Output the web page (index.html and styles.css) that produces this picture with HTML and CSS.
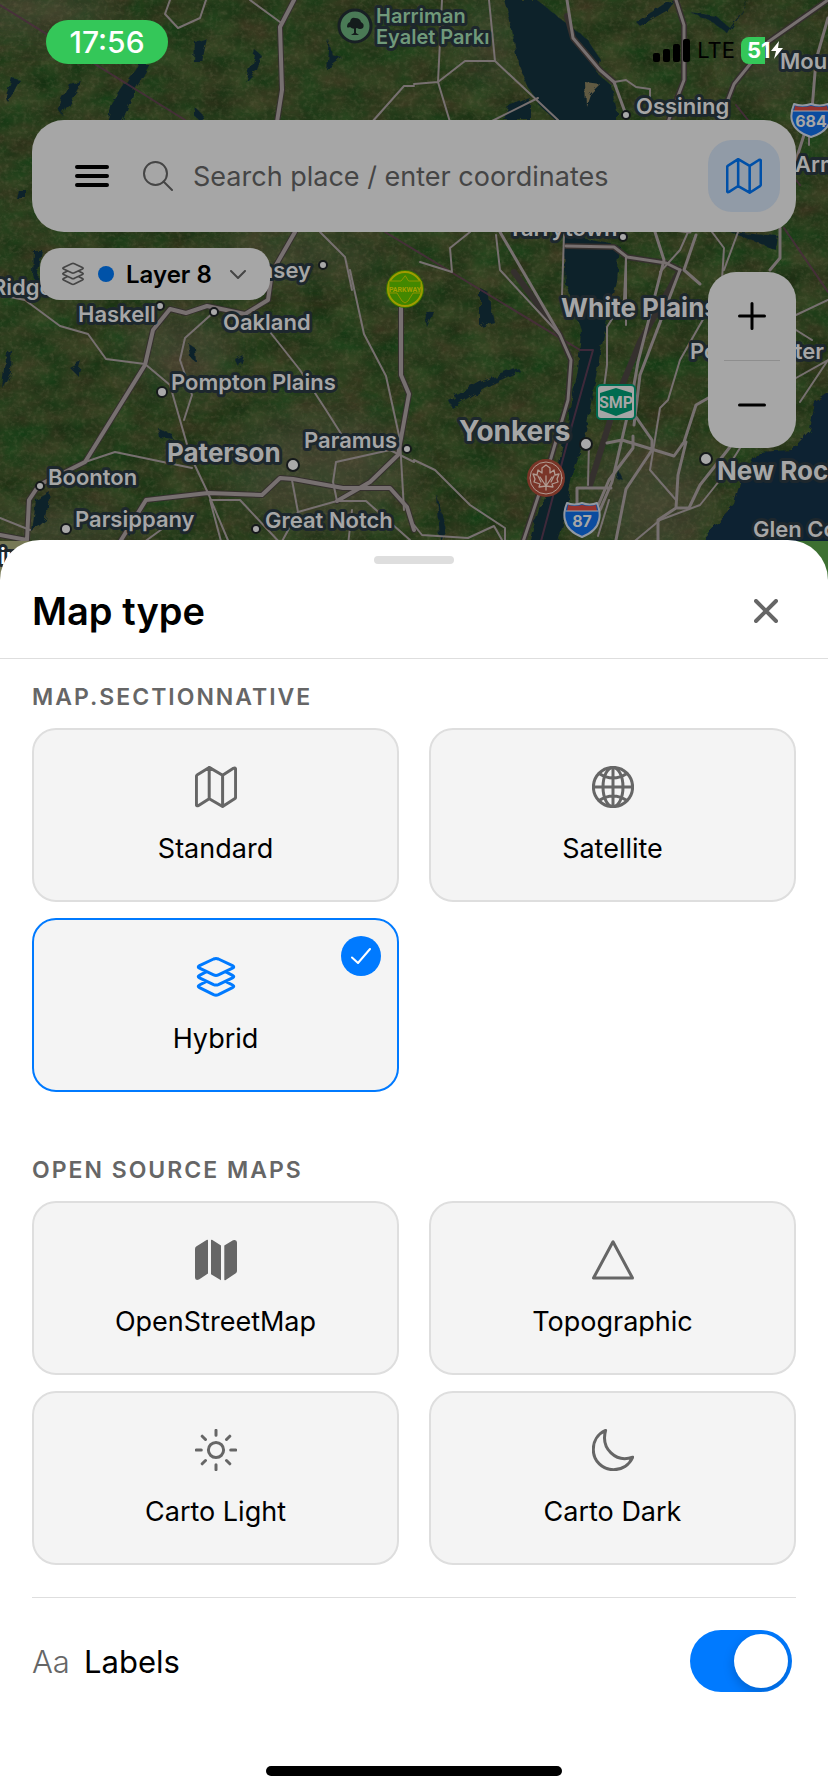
FILE: index.html
```html
<!DOCTYPE html>
<html lang="en">
<head>
<meta charset="utf-8">
<meta name="viewport" content="width=device-width, initial-scale=1">
<title>Map type</title>
<link rel="stylesheet" href="styles.css">
</head>
<body>
<svg class="sprite" aria-hidden="true">
  <symbol id="i-map" viewBox="0 0 42 42">
    <path d="M1.4 10.6Q1.4 9.4 2.4 8.8L14.2 1.4L27.6 9.2L38.4 2.3Q40.6 1.2 40.6 3.5V31Q40.6 32.2 39.6 32.8L27.6 40.5L14.2 32.7L3.6 39.5Q1.4 40.6 1.4 38.4ZM14.2 1.4V32.7M27.6 9.2V40.5"/>
  </symbol>
  <symbol id="i-layers" viewBox="0 0 42 42">
    <path d="M18.6 3Q21 2 23.4 3L37.5 9.6Q40 10.9 37.5 12.2L23.4 18.9Q21 20 18.6 18.9L4.5 12.2Q2 10.9 4.5 9.6ZM11.5 15.7L4.5 19.3Q2 20.6 4.5 21.9L18.6 28.6Q21 29.6 23.4 28.6L37.5 21.9Q40 20.6 37.5 19.3L30.5 15.7M11.5 25.4L4.5 29Q2 30.3 4.5 31.6L18.6 38.6Q21 39.7 23.4 38.6L37.5 31.6Q40 30.3 37.5 29L30.5 25.4"/>
  </symbol>
</svg>

<main class="screen">
  <svg class="map" viewBox="0 0 828 600" preserveAspectRatio="xMidYMin slice" role="img" aria-label="Satellite map north of New York">
    <defs>
      <filter id="terrain" x="0" y="0" width="100%" height="100%" color-interpolation-filters="sRGB">
        <feTurbulence type="fractalNoise" baseFrequency="0.03 0.045" numOctaves="6" seed="8"/>
        <feColorMatrix values="0.2 0 0 0 0.065  0.04 0.12 0 0 0.155  0.08 0.04 0 0 0.05  0 0 0 0 1"/>
      </filter>
      <filter id="grain" x="0" y="0" width="100%" height="100%" color-interpolation-filters="sRGB">
        <feTurbulence type="fractalNoise" baseFrequency="0.22 0.26" numOctaves="3" seed="3"/>
        <feColorMatrix values="0 0 0 0 0.45  0 0 0 0 0.43  0 0 0 0 0.32  1.8 0 0 0 -0.82"/>
      </filter>
      <filter id="soft"><feGaussianBlur stdDeviation="18"/></filter>
      <filter id="ragged"><feTurbulence type="fractalNoise" baseFrequency="0.12" numOctaves="2"/><feDisplacementMap in="SourceGraphic" scale="7"/></filter>
    </defs>
    <rect width="828" height="600" filter="url(#terrain)"/>
    <g filter="url(#soft)" fill="#514b3d" opacity=".5">
      <ellipse cx="30" cy="10" rx="90" ry="22"/><ellipse cx="490" cy="40" rx="18" ry="50"/>
      <ellipse cx="290" cy="255" rx="90" ry="18"/><ellipse cx="180" cy="350" rx="50" ry="40"/>
      <ellipse cx="320" cy="470" rx="90" ry="55"/><ellipse cx="650" cy="500" rx="60" ry="60"/>
      <ellipse cx="770" cy="60" rx="30" ry="30"/><ellipse cx="60" cy="530" rx="70" ry="20"/>
    </g>
    <rect width="828" height="600" filter="url(#grain)" opacity=".36"/>

    <g fill="#10242b" filter="url(#ragged)">
      <path d="M505 0H537L562 20L586 38L601 60L598 74L612 86L617 112V122H557L540 106L527 86L518 62L512 30Z"/>
      <path d="M563 234L620 246L617 282L606 325L599 360L586 430L573 470L567 505L557 542H529L541 503L558 470L564 436L578 370L581 330L566 285Z"/>
      <path d="M830 392L815 402L810 430L792 450L758 452L742 476L734 504L700 542L705 552H830Z" fill="#0d2030"/>
      <path d="M138 64H150L135 90L122 122H107L112 104Z"/>
      <path d="M195 42L207 38L202 62L194 62Z"/><path d="M255 50L262 56L257 70L246 82L251 66Z"/>
      <path d="M12 78L20 80L8 102L5 98Z"/><path d="M70 85L82 82L62 115L58 108Z"/>
      <path d="M329 40L332 55L342 58L326 70Z"/><path d="M18 190h8v8h-10z"/><path d="M34 250H42L36 285L33 275Z"/>
      <path d="M196 108L204 116L202 122L194 116Z"/><path d="M5 358L12 350L11 372L2 388Z"/><path d="M70 368L82 362L78 376Z"/>
      <path d="M189 344L195 348L196 362L191 358Z"/><path d="M236 360L244 356L240 368Z"/><path d="M158 428L172 434L174 440L160 438Z"/>
      <path d="M36 500L50 492L46 520L32 532Z"/><path d="M120 530L132 515L130 536Z"/>
      <path d="M480 288L488 292L494 322L480 326Z"/><path d="M425 310L434 312L428 328Z"/>
      <path d="M448 400L480 382L518 368L520 371L484 388L452 408Z"/>
      <path d="M636 22L664 4L676 0L668 10L640 26Z"/><path d="M690 12L716 16L730 28L750 0L728 34L712 22Z"/>
      <path d="M508 106L530 98V120H504Z"/><path d="M730 232L778 236L776 250Z"/><path d="M618 470L623 480L616 478Z"/>
      <path d="M437 495L440 540L446 530Z"/>
    </g>
    <path d="M585 82L600 84L590 94L586 106Z" fill="#605a42" filter="url(#ragged)"/>

    <g fill="none" stroke="#4b2c3e" stroke-width="2" opacity=".8">
      <path d="M0 5L185 120M385 232L451 272L580 350H593L572 425L540 545M736 105L800 185M784 228L828 292"/>
    </g>
    <g fill="none" stroke="#35302e" stroke-linejoin="round">
      <path stroke-width="6" d="M294 0L280 27L282 90L277 122M295 232L272 272L268 300L245 314M401 305V375L409 394L398 455L370 482L337 501M0 535L27 540L29 500L39 485L85 462L145 365L153 330L170 309L186 313L207 306L245 314M118 545L146 500L208 493L262 495L280 478L293 479L343 488L390 488L407 507L414 530"/>
      <path stroke-width="6" d="M567 16L573 38L600 70L614 82M514 272L560 335L571 360L568 400L551 458L522 545M676 0L684 25V80L668 122M828 0L768 42L734 84L720 120M566 246L614 247L627 257L666 263L680 270L640 342L618 395L590 485"/>
    </g>
    <g fill="none" stroke="#777070" stroke-linejoin="round">
      <path stroke-width="4" d="M294 0L280 27L282 90L277 122M295 232L272 272L268 300L245 314M401 305V375L409 394L398 455L370 482L337 501M0 535L27 540L29 500L39 485L85 462L145 365L153 330L170 309L186 313L207 306L245 314M118 545L146 500L208 493L262 495L280 478L293 479L343 488L390 488L407 507L414 530"/>
      <path stroke-width="3" d="M567 0L573 38L600 70L614 82L625 112M500 232L560 335L571 360L568 400L551 458L522 545M676 0L684 25V80L668 122M828 0L768 42L734 84L720 120M566 246L614 247L627 257L666 263L680 270M828 18L816 60L812 110L796 160M780 228V258L770 270"/>
      <path stroke-width="3" d="M655 232L664 260L638 362L632 396L612 482L600 510M680 270L640 375L634 425M636 417L652 440V450L626 489L615 545M607 443L622 440L674 456L684 442L696 405L710 397M686 442L678 475L676 508L658 520V545M676 508H689L700 485L730 447M611 488H577V505M633 436V448L609 480L597 508M674 230L690 232M696 235L684 270L700 284"/>
      <path stroke-width="2" d="M250 0L280 22M170 0L165 14L178 28L200 18L206 0M0 295L25 300L60 326L88 334L106 359L145 364L170 385L190 455L208 493L230 545M214 312L185 338L180 360L192 395L184 420M85 462L115 452L192 468M245 314L270 332L300 370L326 410L345 440M372 122L404 86H414M414 84L438 82L465 61H495L558 120M489 0L495 61M438 82L450 122M438 82L442 0M538 98L490 122M320 232L345 257L352 290M350 270L364 334L386 376L400 440L404 510M222 545L210 500L240 500L282 545M292 480L298 512L337 501L333 482L336 462L390 450L414 462M298 512L280 545M337 501H366L410 540M352 510L348 545M414 460L435 470L470 505L505 528V545M180 516L140 545M0 518L30 530"/>
      <path stroke-width="2" d="M496 235L500 270L560 335M470 232L450 248L452 272L420 262M414 525L422 535L468 538L494 526L502 540M564 234L562 295M626 257L624 300L607 327V365L601 410M626 257V325M614 82L626 80L636 87L650 89V98M712 232L724 248L722 280M738 232L724 270M660 272L680 250L688 232M714 300L680 360L668 400L660 408L650 470L676 500M796 315L828 300M796 330L812 340M796 378L828 360L800 402M630 545L660 520L700 505L720 480L740 448M609 500L598 536M589 442L588 485M809 110V145"/>
    </g>

    <path d="M0 541H36Q8 548 0 590Z" fill="#777956"/>
    <path d="M828 541H792Q820 548 828 590Z" fill="#3d7032"/>

    <g class="town-dots">
      <circle cx="323" cy="265" r="4"/><circle cx="160" cy="306" r="4"/><circle cx="214" cy="312" r="4"/>
      <circle cx="162" cy="392" r="5"/><circle cx="293" cy="465" r="6"/><circle cx="407" cy="449" r="4"/>
      <circle cx="40" cy="486" r="4"/><circle cx="66" cy="529" r="5"/><circle cx="256" cy="529" r="4"/>
      <circle cx="626" cy="115" r="4"/><circle cx="623" cy="237" r="4"/><circle cx="586" cy="444" r="6"/><circle cx="706" cy="459" r="6"/>
    </g>
    <g class="towns">
      <text class="park" x="376" y="23">Harriman</text><text class="park" x="376" y="44">Eyalet Parkı</text>
      <text x="636" y="114">Ossining</text><text x="780" y="69">Mount</text><text x="795" y="172">Armonk</text>
      <text x="508" y="236">Tarrytown</text><text x="311" y="278" text-anchor="end">Ramsey</text><text x="-8" y="295">Ridge</text>
      <text x="78" y="322">Haskell</text><text x="223" y="330">Oakland</text><text x="304" y="448">Paramus</text>
      <text x="48" y="485">Boonton</text><text x="265" y="528">Great Notch</text><text x="824" y="359" text-anchor="end">Port Chester</text>
      <text x="171" y="390">Pompton Plains</text><text x="75" y="527">Parsippany</text><text x="753" y="537">Glen Cove</text>
      <text class="big" x="167" y="462">Paterson</text><text class="big" x="561" y="317">White Plains</text>
      <text class="city" x="459" y="441">Yonkers</text><text class="big" x="717" y="480">New Rochelle</text>
      <text class="bright" x="0" y="564">in</text>
    </g>

    <circle cx="355" cy="26" r="16" fill="#4a7a56" stroke="#182024" stroke-width="3"/>
    <g fill="#141c1c"><path d="M347 27q0-4 3-5q1-5 5-4q5 0 6 4q4 2 2 6q-3 2-6 0q-4 2-7-1q-2 1-3 0z"/><path d="M354 25h2v8l3 2h-8l3-2z"/></g>

    <circle cx="405" cy="289" r="19" fill="#377500"/><circle cx="405" cy="289" r="17" fill="#3f8400" stroke="#9f9b00" stroke-width="2"/>
    <path d="M405 276l-4 5h-12v12h8l5 8 3 2 3-2 5-8h8v-12h-12z" fill="#438800" stroke="#8f9400"/>
    <text class="parkway" x="405" y="292">PARKWAY</text>

    <rect x="597" y="385" width="38" height="34" rx="4" fill="#a6a6a6" stroke="#006b50" stroke-width="2"/>
    <path d="M616 388L632 393V410L616 416L600 410V393Z" fill="#006b50"/>
    <text class="smp" x="616" y="408">SMP</text>

    <circle cx="546" cy="478" r="19" fill="#7a3528"/><circle cx="546" cy="478" r="16" fill="none" stroke="#b09a90"/>
    <path d="M546 490V476M546 486l-7 1 1-3-6-2 1-3-2-5 4 1 1-5 4 3 0-5 4-3 4 3v5l4-3 1 5 4-1-2 5 1 3-6 2 1 3zM546 486l-6-9M546 486l6-9M538 476l3 6M554 476l-3 6" fill="none" stroke="#b09a90" stroke-width="1.3"/>

    <g>
      <path d="M567 503q7 3 15 0q8 3 15 0q4 10 2 17q-2 11-17 17q-15-6-17-17q-2-7 2-17z" fill="#0b4c9f" stroke="#9298a2" stroke-width="2"/>
      <path d="M568 505q7 2 14 0q7 2 14 0l1 6h-30z" fill="#95332e"/><path d="M566 511h32" stroke="#a6a6a6"/>
      <text class="shield" x="582" y="527">87</text>
    </g>
    <g>
      <path d="M794 104q8 3 17 0q9 3 17 0q4 10 2 17q-3 11-19 16q-16-5-19-16q-2-7 2-17z" fill="#0b4c9f" stroke="#9298a2" stroke-width="2"/>
      <path d="M795 106q8 2 16 0q8 2 16 0l1 5h-34z" fill="#95332e"/><path d="M793 111h36" stroke="#a6a6a6"/>
      <text class="shield" x="811" y="127">684</text>
    </g>
  </svg>

  <section class="map-view">
    <header class="status">
      <span class="time">17:56</span>
      <span class="signals">
        <svg class="bars" viewBox="0 0 38 23" aria-hidden="true"><rect y="14" width="7" height="9" rx="2"/><rect x="10" y="10" width="7" height="13" rx="2"/><rect x="20" y="5" width="7" height="18" rx="2"/><rect x="30" width="7" height="23" rx="2"/></svg>
        <span class="network">LTE</span>
        <span class="battery"><span class="level">51</span><svg viewBox="0 0 12 18" aria-hidden="true"><path d="M8 0L0 10H5L3 18L12 7H7Z"/></svg></span>
      </span>
    </header>

    <div class="search">
      <button class="icon-btn" aria-label="Menu"><svg class="menu-icon" viewBox="0 0 34 24"><path d="M2 3H32M2 12H32M2 21H32"/></svg></button>
      <svg class="lens" viewBox="0 0 30 30" aria-hidden="true"><circle cx="12.5" cy="12.5" r="11.5"/><path d="M20.5 20.5L29 29"/></svg>
      <input class="query" type="text" aria-label="Search" placeholder="Search place / enter coordinates">
      <button class="map-btn" aria-label="Map type"><svg viewBox="0 0 42 42"><use href="#i-map"/></svg></button>
    </div>

    <div class="controls">
      <button class="layer">
        <svg class="layer-icon" viewBox="0 0 42 42" aria-hidden="true"><use href="#i-layers"/></svg>
        <span class="dot"></span><span>Layer 8</span>
        <svg class="chevron" viewBox="0 0 16 9" aria-hidden="true"><path d="M1 1L8 8L15 1"/></svg>
      </button>
      <div class="zoom">
        <button aria-label="Zoom in"><svg viewBox="0 0 28 28"><path d="M14 1.5V26.5M1.5 14H26.5"/></svg></button>
        <button aria-label="Zoom out"><svg viewBox="0 0 28 28"><path d="M1.5 14H26.5"/></svg></button>
      </div>
    </div>
  </section>

  <section class="sheet" aria-labelledby="title">
    <div class="handle"></div>
    <div class="sheet-head">
      <h1 id="title">Map type</h1>
      <button class="close" aria-label="Close"><svg viewBox="0 0 24 24"><path d="M2 2L22 22M22 2L2 22"/></svg></button>
    </div>
    <div class="sheet-body">
      <h2>MAP.SECTIONNATIVE</h2>
      <div class="grid">
        <label class="card"><input type="radio" name="type"><svg viewBox="0 0 42 42"><use href="#i-map"/></svg><span>Standard</span></label>
        <label class="card"><input type="radio" name="type"><svg viewBox="0 0 42 42"><circle cx="21" cy="21" r="19.6"/><ellipse cx="21" cy="21" rx="10" ry="19.6"/><path d="M21 1.4V40.6M1.4 21H40.6M7 7.5Q21 16.5 35 7.5M7 34.5Q21 25.5 35 34.5"/></svg><span>Satellite</span></label>
        <label class="card"><input type="radio" name="type" checked><svg viewBox="0 0 42 42"><use href="#i-layers"/></svg><span>Hybrid</span><i class="badge"><svg viewBox="0 0 20 16"><path d="M1 9.5L7 15L19 1"/></svg></i></label>
      </div>
      <h2>OPEN SOURCE MAPS</h2>
      <div class="grid">
        <label class="card"><input type="radio" name="type"><svg class="solid" viewBox="0 0 42 42"><path d="M0 10Q0 8.4 1.2 7.6L12 .8Q13 .4 13 1.5V34.5L4 40.6Q0 42 0 38.5ZM16 1.3Q16 .4 17 .8L26 6.5V41.3L16 35.2ZM29.3 6.5L38 1.2Q42 .2 42 3.5V32Q42 33.4 40.8 34.2L30.3 41.2Q29.3 41.6 29.3 40.6Z"/></svg><span>OpenStreetMap</span></label>
        <label class="card"><input type="radio" name="type"><svg viewBox="0 0 42 42"><path d="M21 2.8L1.5 39H40.5Z"/></svg><span>Topographic</span></label>
        <label class="card"><input type="radio" name="type"><svg viewBox="0 0 42 42"><circle cx="21" cy="21" r="7.6"/><path d="M21 1.3V6.3M21 35.7V40.7M1.3 21H6.3M35.7 21H40.7M7.2 7.2L10.5 10.5M31.5 31.5L34.8 34.8M7.2 34.8L10.5 31.5M31.5 10.5L34.8 7.2"/></svg><span>Carto Light</span></label>
        <label class="card"><input type="radio" name="type"><svg viewBox="0 0 42 42"><path d="M13.6 1.4C5.5 5 1.3 12.5 1.3 20.5C1.3 32 10.5 40.7 21.5 40.7C30 40.7 37.3 36 40.7 28.2C24 34 8.5 20 13.6 1.4Z"/></svg><span>Carto Dark</span></label>
      </div>
      <label class="labels-row"><span class="aa" aria-hidden="true">Aa</span><span class="labels-name">Labels</span><input class="switch" type="checkbox" role="switch" checked></label>
    </div>
    <div class="home"></div>
  </section>
</main>
</body>
</html>
```
FILE: styles.css
```css
* { box-sizing: border-box; }

body {
  margin: 0;
  background: #fff;
  color: #000;
  font-family: Inter, "Liberation Sans", sans-serif;
}

button, input { font: inherit; margin: 0; }
button { border: 0; padding: 0; background: none; color: inherit; }
svg { fill: none; stroke: currentColor; stroke-linecap: round; stroke-linejoin: round; display: block; }

.sprite { display: none; }

.screen {
  position: relative;
  display: flex;
  flex-direction: column;
  min-height: 100vh;
}

/* Map backdrop */
.map {
  position: absolute;
  inset: 0 0 auto;
  width: 100%;
  height: 600px;
  stroke: none;
}
.town-dots circle { fill: #a9a9a9; stroke: #15191b; stroke-width: 2px; }
.towns text {
  fill: #a6a6a6;
  stroke: #1d272d;
  stroke-width: 6px;
  paint-order: stroke;
  font-size: 22px;
  font-weight: 600;
}
.towns .big { font-size: 26px; font-weight: 700; }
.towns .city { font-size: 28px; font-weight: 700; }
.towns .park { font-size: 20px; fill: #70997a; }
.towns .bright { fill: #fff; }
.parkway, .smp, .shield { text-anchor: middle; fill: #a6a6a6; font-weight: 700; }
.parkway { font-size: 7px; font-family: Roboto, sans-serif; fill: #a3a000; }
.smp { font-size: 16px; font-family: Roboto, sans-serif; }
.shield { font-size: 16px; }

.map-view { position: relative; min-height: 540px; padding: 0 32px; }

/* Status bar */
.status {
  display: flex;
  justify-content: space-between;
  align-items: flex-start;
  height: 120px;
  padding: 20px 12px 0 14px;
}
.time {
  width: 122px;
  height: 44px;
  border-radius: 22px;
  background: #34c759;
  color: #fff;
  font-size: 30px;
  font-weight: 500;
  line-height: 44px;
  text-align: center;
}
.signals { display: flex; align-items: center; gap: 6px; height: 28px; margin-top: 16px; }
.bars { width: 38px; height: 23px; fill: #000; stroke: none; }
.network { font-size: 22px; line-height: 28px; }
.battery {
  display: flex;
  align-items: center;
  width: 43px;
  height: 27px;
  padding-left: 6px;
  border-radius: 8px;
  background: linear-gradient(90deg, #34c759 24px, transparent 24px);
  color: #fff;
}
.level { font-size: 22px; font-weight: 700; }
.battery svg { flex: none; width: 12px; height: 18px; fill: #fff; stroke: none; }

/* Search bar */
.search {
  display: flex;
  align-items: center;
  height: 112px;
  padding: 0 16px 0 43px;
  border-radius: 32px;
  background: #a6a6a6;
}
.menu-icon { width: 34px; height: 24px; stroke-width: 4px; }
.lens { width: 30px; height: 30px; margin: 0 20px 0 34px; color: #454545; stroke-width: 2px; flex: none; }
.query { flex: 1; min-width: 0; border: 0; padding: 0; outline: 0; background: none; font-size: 27px; }
.query::placeholder { color: #454545; opacity: 1; }
.map-btn {
  display: grid;
  place-items: center;
  width: 72px;
  height: 72px;
  border-radius: 24px;
  background: #919ba7;
  color: #0050a8;
}
.map-btn svg { width: 36px; height: 36px; stroke-width: 3px; }

/* Map controls */
.controls { display: flex; justify-content: space-between; align-items: flex-start; padding: 16px 0 0 8px; }
.layer {
  display: flex;
  align-items: center;
  height: 52px;
  padding: 0 24px 0 21px;
  border-radius: 20px;
  background: #a6a6a6;
  font-size: 24px;
  font-weight: 600;
}
.layer-icon { width: 24px; height: 24px; color: #454545; stroke-width: 3px; }
.dot { width: 16px; height: 16px; margin: 0 12px 0 13px; border-radius: 50%; background: #0052a8; }
.chevron { width: 16px; height: 9px; margin-left: 18px; color: #454545; stroke-width: 2px; }
.zoom { width: 88px; margin-top: 24px; border-radius: 28px; background: #a6a6a6; }
.zoom button { display: grid; place-items: center; width: 56px; height: 88px; margin: 0 16px; }
.zoom button + button { border-top: 1px solid #8e8e8e; }
.zoom svg { width: 28px; height: 28px; stroke-width: 3px; }

/* Bottom sheet */
.sheet {
  position: relative;
  flex: 1;
  display: flex;
  flex-direction: column;
  padding-top: 16px;
  border-radius: 40px 40px 0 0;
  background: #fff;
}
.handle { width: 80px; height: 8px; margin: 0 auto; border-radius: 4px; background: #dedede; }
.sheet-head {
  display: flex;
  justify-content: space-between;
  align-items: center;
  height: 95px;
  padding: 0 50px 0 32px;
  border-bottom: 1px solid #dedede;
}
h1 { margin: 0; font-size: 38px; line-height: 48px; font-weight: 600; }
.close { color: #666; }
.close svg { width: 24px; height: 24px; stroke-width: 4px; }
.sheet-body { padding: 24px 32px 0; }
h2 {
  margin: 0 0 16px;
  color: #666;
  font-size: 23px;
  line-height: 29px;
  font-weight: 600;
  letter-spacing: 2px;
}
.grid { display: grid; grid-template-columns: 1fr 1fr; gap: 16px 30px; }
.grid + h2 { margin-top: 64px; }
.card {
  position: relative;
  display: flex;
  flex-direction: column;
  align-items: center;
  gap: 24px;
  padding: 36px 16px 34px;
  border: 2px solid #dedede;
  border-radius: 24px;
  background: #f4f4f4;
  font-size: 27px;
  line-height: 34px;
}
.card input { position: absolute; inset: 0; margin: 0; appearance: none; border-radius: inherit; }
.card > svg { width: 42px; height: 42px; color: #666; stroke-width: 3px; }
.card > .solid { fill: currentColor; stroke: none; }
.card:has(:checked) { border-color: #007aff; }
.card:has(:checked) > svg { color: #007aff; }
.badge {
  position: absolute;
  top: 16px;
  right: 16px;
  display: grid;
  place-items: center;
  width: 40px;
  height: 40px;
  border-radius: 50%;
  background: #007aff;
  color: #fff;
}
.badge svg { width: 20px; height: 16px; stroke-width: 2px; }

.labels-row {
  display: flex;
  align-items: center;
  margin-top: 32px;
  padding: 32px 4px 32px 0;
  border-top: 1px solid #dedede;
  font-size: 31px;
}
.aa { width: 52px; color: #666; font-weight: 300; }
.labels-name { flex: 1; }
.switch {
  appearance: none;
  display: flex;
  width: 102px;
  height: 62px;
  padding: 4px;
  border-radius: 31px;
  background: #ccc;
}
.switch::before {
  content: "";
  width: 54px;
  height: 54px;
  border-radius: 50%;
  background: #fff;
  box-shadow: 0 4px 12px rgba(0, 0, 0, .2);
}
.switch:checked { justify-content: flex-end; overflow: hidden; background: #007aff; }
.home { width: 296px; height: 10px; margin: auto auto 16px; border-radius: 5px; background: #000; }
```
